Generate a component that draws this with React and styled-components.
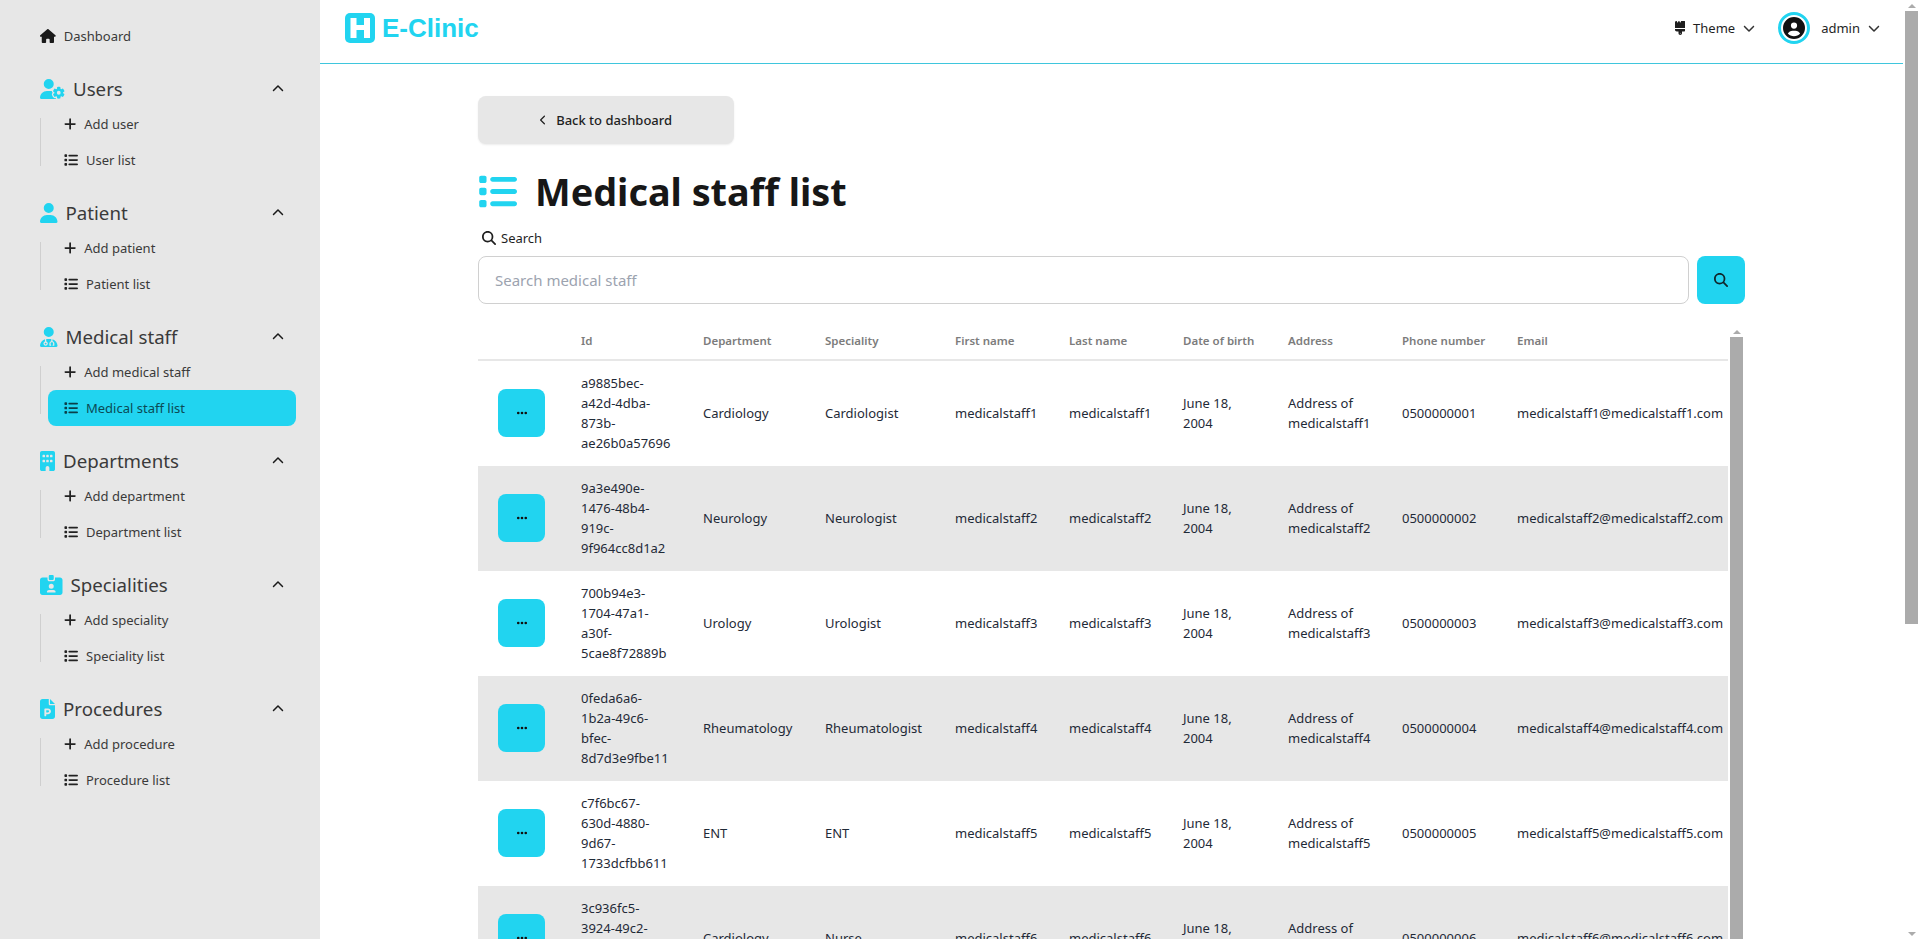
import React from 'react';
import styled, { createGlobalStyle } from 'styled-components';
import {
  FaHouse,
  FaUserGear,
  FaUser,
  FaUserDoctor,
  FaBuilding,
  FaIdCardClip,
  FaFilePowerpoint,
  FaPlus,
  FaList,
  FaChevronUp,
  FaChevronDown,
  FaChevronLeft,
  FaBrush,
  FaCircleUser,
  FaMagnifyingGlass,
  FaEllipsis,
} from 'react-icons/fa6';

const CYAN = '#21d4f0';
const GREY = '#e7e7e7';

const GlobalStyle = createGlobalStyle`
  html, body {
    margin: 0;
    height: 100%;
    overflow: hidden;
  }
  body {
    font-family: "Noto Sans", "Open Sans", sans-serif;
    color: #1f1f1f;
  }
  svg {
    flex-shrink: 0;
  }
`;

const Layout = styled.div`
  display: flex;
  height: 100vh;
  overflow: hidden;
`;

const Sidebar = styled.aside`
  flex: 0 0 320px;
  box-sizing: border-box;
  background: ${GREY};
  padding: 18px 24px 0 40px;
  display: flex;
  flex-direction: column;
  gap: 18px;
  color: #3a3a3a;
`;

const DashLink = styled.a`
  display: flex;
  align-items: center;
  gap: 8px;
  height: 36px;
  font-size: 13px;
  svg {
    width: 15.75px;
    height: 14px;
    color: #1a1a1a;
  }
`;

const GroupTitle = styled.div`
  display: flex;
  align-items: center;
  gap: 8px;
  box-sizing: border-box;
  height: 34px;
  padding: 0 12px 1px 0;
  font-size: 18.7px;
`;

const GroupIcon = styled.span`
  display: flex;
  color: ${CYAN};
  svg {
    width: ${(p) => p.$width}px;
    height: 20px;
  }
`;

const Caret = styled(FaChevronUp)`
  margin-left: auto;
  font-size: 12px;
  color: #1a1a1a;
`;

const SubList = styled.ul`
  position: relative;
  list-style: none;
  margin: 0 0 0 8px;
  padding: 0;
  &::before {
    content: "";
    position: absolute;
    left: -8px;
    top: 12px;
    bottom: 12px;
    width: 1px;
    background: #cfcfcf;
  }
`;

const SubItem = styled.li`
  display: flex;
  align-items: center;
  gap: 8px;
  height: 36px;
  padding-left: 16px;
  border-radius: 8px;
  font-size: 13px;
  background: ${(p) => (p.$active ? CYAN : 'transparent')};
  color: ${(p) => (p.$active ? '#0b4a55' : '#3a3a3a')};
  svg {
    font-size: 14px;
    color: ${(p) => (p.$active ? '#0b3f49' : '#222')};
  }
`;

const PlusIcon = styled(FaPlus)`
  && {
    width: 12.25px;
  }
`;

const Page = styled.main`
  flex: 1;
  min-width: 0;
  overflow: hidden;
`;

const Rail = styled.div`
  flex: 0 0 17px;
  box-sizing: border-box;
  display: flex;
  flex-direction: column;
  padding: 0 2px;
`;

const RailArrow = styled.span`
  flex: 0 0 11px;
  display: flex;
  align-items: center;
  justify-content: center;
  margin-top: ${(p) => (p.$down ? 'auto' : '0')};
  &::before {
    content: "";
    border-left: 4px solid transparent;
    border-right: 4px solid transparent;
    border-top: ${(p) => (p.$down ? '4px solid #ababab' : '0')};
    border-bottom: ${(p) => (p.$down ? '0' : '4px solid #ababab')};
  }
`;

const RailThumb = styled.div`
  flex: 0 0 ${(p) => p.$size}px;
  background: #ababab;
`;

const Topbar = styled.header`
  display: flex;
  align-items: center;
  height: 56px;
  padding: 0 23px 7px 25px;
  border-bottom: 1px solid #3fc6dd;
`;

const Logo = styled.div`
  display: flex;
  align-items: center;
  gap: 7px;
  color: ${CYAN};
  font: 700 26px "Liberation Sans", Arial, sans-serif;
`;

const LogoMark = styled.svg`
  width: 30px;
  height: 30px;
`;

const TopRight = styled.div`
  margin-left: auto;
  display: flex;
  align-items: center;
  font-size: 13px;
`;

const Dropdown = styled.div`
  display: flex;
  align-items: center;
  gap: 8px;
`;

const BrushIcon = styled(FaBrush)`
  width: 10.5px;
  height: 14px;
`;

const Chevron = styled(FaChevronDown)`
  font-size: 12px;
  color: #333;
`;

const Avatar = styled.span`
  display: flex;
  align-items: center;
  justify-content: center;
  width: 32px;
  height: 32px;
  box-sizing: border-box;
  margin: 0 11px 0 23px;
  border: 3px solid ${CYAN};
  border-radius: 50%;
  svg {
    font-size: 22px;
    color: #111;
  }
`;

const Content = styled.div`
  padding: 32px 158px 80px 158px;
`;

const BackButton = styled.button`
  display: flex;
  align-items: center;
  justify-content: center;
  gap: 10px;
  width: 256px;
  height: 48px;
  border: 0;
  border-radius: 8px;
  background: ${GREY};
  box-shadow: 0 1px 2px rgba(0, 0, 0, 0.08);
  font: 500 13px "Noto Sans", sans-serif;
  color: #1f1f1f;
  svg {
    width: 6.25px;
    height: 10px;
  }
`;

const Heading = styled.h1`
  display: flex;
  align-items: center;
  gap: 18px;
  height: 48px;
  margin: 23px 0 13px;
  font-size: 37.8px;
  font-weight: 700;
  color: #171717;
  svg {
    font-size: 39px;
    color: ${CYAN};
  }
`;

const SearchLabel = styled.label`
  display: flex;
  align-items: center;
  gap: 5px;
  height: 20px;
  margin: 0 0 8px 4px;
  font-size: 13px;
  svg {
    font-size: 14px;
  }
`;

const SearchRow = styled.div`
  display: flex;
  gap: 8px;
`;

const SearchInput = styled.input`
  flex: 1;
  min-width: 0;
  height: 48px;
  box-sizing: border-box;
  padding: 0 16px;
  border: 1px solid #d0d0d0;
  border-radius: 8px;
  font: 15px "Noto Sans", sans-serif;
  &::placeholder {
    color: #9ca3af;
  }
`;

const SearchButton = styled.button`
  flex: 0 0 48px;
  height: 48px;
  display: flex;
  align-items: center;
  justify-content: center;
  border: 0;
  border-radius: 8px;
  background: ${CYAN};
  font-size: 14px;
  color: #10272c;
`;

const TableBox = styled.div`
  display: flex;
  height: 1000px;
  margin-top: 22px;
`;

const TableArea = styled.div`
  flex: 1;
  min-width: 0;
  overflow: hidden;
`;

const Table = styled.table`
  table-layout: fixed;
  width: 100%;
  border-collapse: collapse;
  font-size: 13px;
  line-height: 20px;
`;

const HeadCell = styled.th`
  height: 34px;
  box-sizing: border-box;
  padding: 0 8px 4px 20px;
  border-bottom: 2px solid ${GREY};
  font-size: 11.5px;
  font-weight: 600;
  text-align: left;
  color: #7c7c7c;
`;

const Row = styled.tr`
  background: ${(p) => (p.$striped ? GREY : '#fff')};
`;

const Cell = styled.td`
  padding: 12px 8px 13px 20px;
  color: #1f2a37;
  white-space: ${(p) => (p.$nowrap ? 'nowrap' : 'normal')};
`;

const DateCell = styled(Cell)`
  padding-right: 30px;
`;

const RowButton = styled.button`
  display: flex;
  align-items: center;
  justify-content: center;
  width: 47px;
  height: 48px;
  border: 0;
  border-radius: 8px;
  background: ${CYAN};
  font-size: 12px;
  color: #111;
`;

const groups = [
  { title: 'Users', Icon: FaUserGear, width: 25, add: 'Add user', list: 'User list' },
  { title: 'Patient', Icon: FaUser, width: 17.5, add: 'Add patient', list: 'Patient list' },
  { title: 'Medical staff', Icon: FaUserDoctor, width: 17.5, add: 'Add medical staff', list: 'Medical staff list', active: true },
  { title: 'Departments', Icon: FaBuilding, width: 15, add: 'Add department', list: 'Department list' },
  { title: 'Specialities', Icon: FaIdCardClip, width: 22.5, add: 'Add speciality', list: 'Speciality list' },
  { title: 'Procedures', Icon: FaFilePowerpoint, width: 15, add: 'Add procedure', list: 'Procedure list' },
];

const columns = [
  ['', 83],
  ['Id', 122],
  ['Department', 122],
  ['Speciality', 130],
  ['First name', 114],
  ['Last name', 114],
  ['Date of birth', 105],
  ['Address', 114],
  ['Phone number', 115],
  ['Email', 232],
];

const staff = [
  ['a9885bec-', 'a42d-4dba-', '873b-', 'ae26b0a57696', 'Cardiology', 'Cardiologist'],
  ['9a3e490e-', '1476-48b4-', '919c-', '9f964cc8d1a2', 'Neurology', 'Neurologist'],
  ['700b94e3-', '1704-47a1-', 'a30f-', '5cae8f72889b', 'Urology', 'Urologist'],
  ['0feda6a6-', '1b2a-49c6-', 'bfec-', '8d7d3e9fbe11', 'Rheumatology', 'Rheumatologist'],
  ['c7f6bc67-', '630d-4880-', '9d67-', '1733dcfbb611', 'ENT', 'ENT'],
  ['3c936fc5-', '3924-49c2-', '8a41-', '6d20e7b1c5f4', 'Cardiology', 'Nurse'],
];

export default function App() {
  return (
    <Layout>
      <GlobalStyle />
      <Sidebar>
        <DashLink>
          <FaHouse />
          Dashboard
        </DashLink>
        {groups.map(({ title, Icon, width, add, list, active }) => (
          <div key={title}>
            <GroupTitle>
              <GroupIcon $width={width}>
                <Icon />
              </GroupIcon>
              {title}
              <Caret />
            </GroupTitle>
            <SubList>
              <SubItem>
                <PlusIcon />
                {add}
              </SubItem>
              <SubItem $active={active}>
                <FaList />
                {list}
              </SubItem>
            </SubList>
          </div>
        ))}
      </Sidebar>
      <Page>
        <Topbar>
          <Logo>
            <LogoMark viewBox="0 0 30 30">
              <rect width="30" height="30" rx="5" fill={CYAN} />
              <path d="M5.5 5h6v7h7.5V5h6v20h-6v-8h-7.5v8h-6z" fill="#fff" />
            </LogoMark>
            E-Clinic
          </Logo>
          <TopRight>
            <Dropdown>
              <BrushIcon />
              Theme
              <Chevron />
            </Dropdown>
            <Avatar>
              <FaCircleUser />
            </Avatar>
            <Dropdown>
              admin
              <Chevron />
            </Dropdown>
          </TopRight>
        </Topbar>
        <Content>
          <BackButton>
            <FaChevronLeft />
            Back to dashboard
          </BackButton>
          <Heading>
            <FaList />
            Medical staff list
          </Heading>
          <SearchLabel>
            <FaMagnifyingGlass />
            Search
          </SearchLabel>
          <SearchRow>
            <SearchInput placeholder="Search medical staff" />
            <SearchButton>
              <FaMagnifyingGlass />
            </SearchButton>
          </SearchRow>
          <TableBox>
            <TableArea>
              <Table>
                <colgroup>
                  {columns.map(([name, width]) => (
                    <col key={name} width={width} />
                  ))}
                </colgroup>
                <thead>
                  <tr>
                    {columns.map(([name]) => (
                      <HeadCell key={name}>{name}</HeadCell>
                    ))}
                  </tr>
                </thead>
                <tbody>
                  {staff.map(([a, b, c, d, department, speciality], i) => {
                    const name = `medicalstaff${i + 1}`;
                    return (
                      <Row key={a} $striped={i % 2 === 1}>
                        <Cell>
                          <RowButton>
                            <FaEllipsis />
                          </RowButton>
                        </Cell>
                        <Cell $nowrap>
                          {a}
                          <br />
                          {b}
                          <br />
                          {c}
                          <br />
                          {d}
                        </Cell>
                        <Cell>{department}</Cell>
                        <Cell>{speciality}</Cell>
                        <Cell>{name}</Cell>
                        <Cell>{name}</Cell>
                        <DateCell>June 18, 2004</DateCell>
                        <Cell>Address of {name}</Cell>
                        <Cell>{`050000000${i + 1}`}</Cell>
                        <Cell $nowrap>{`${name}@${name}.com`}</Cell>
                      </Row>
                    );
                  })}
                </tbody>
              </Table>
            </TableArea>
            <Rail>
              <RailArrow />
              <RailThumb $size={860} />
            </Rail>
          </TableBox>
        </Content>
      </Page>
      <Rail>
        <RailArrow />
        <RailThumb $size={613} />
        <RailArrow $down />
      </Rail>
    </Layout>
  );
}
